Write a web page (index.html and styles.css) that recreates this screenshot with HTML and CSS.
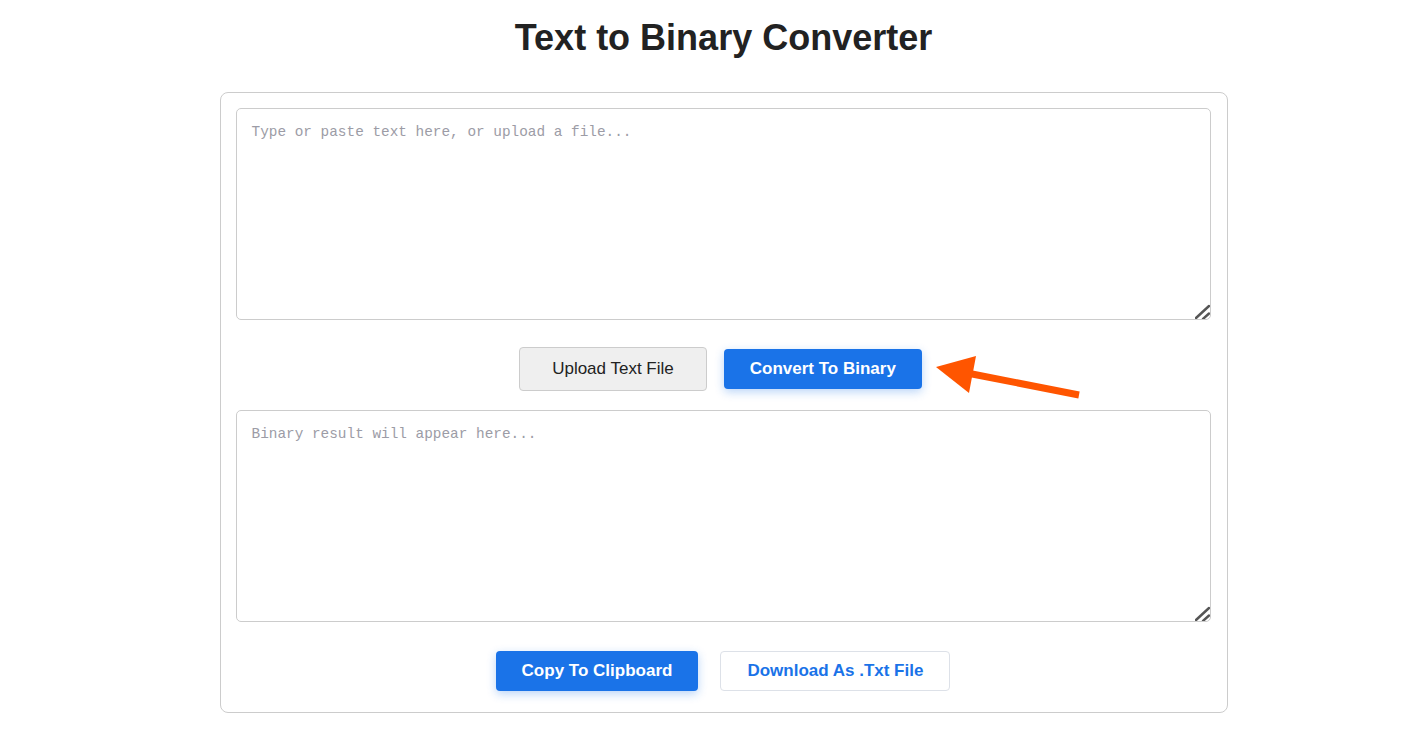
FILE: index.html
```html
<!DOCTYPE html>
<html lang="en">
<head>
    <meta charset="UTF-8">
    <meta name="viewport" content="width=device-width, initial-scale=1.0">
    <title>Text to Binary Converter</title>
    <link rel="stylesheet" href="styles.css">
</head>
<body>

    <h1>Text to Binary Converter</h1>

    <div class="converter">
        <textarea id="inputText" class="text-box" placeholder="Type or paste text here, or upload a file..."></textarea>

        <div class="actions actions-top">
            <label class="upload-btn" for="fileInput">Upload Text File</label>
            <input type="file" id="fileInput" accept=".txt" hidden>
            <button class="btn btn-primary" onclick="convertToBinary()">Convert To Binary</button>
        </div>

        <!-- pointer to the convert button -->
        <svg class="hint-arrow" width="155" height="50" viewBox="0 0 155 50">
            <line x1="36" y1="22" x2="148" y2="44" stroke="#ff5500" stroke-width="7"/>
            <polygon points="5,16 45,5 38,42" fill="#ff5500"/>
        </svg>

        <textarea id="outputText" class="text-box" placeholder="Binary result will appear here..." readonly></textarea>

        <div class="actions actions-bottom">
            <button class="btn btn-primary" onclick="copyResult()">Copy To Clipboard</button>
            <button class="btn btn-outline" onclick="downloadResult()">Download As .Txt File</button>
        </div>
    </div>

    <script>
        function convertToBinary() {
            const text = document.getElementById('inputText').value;
            const bits = Array.from(text).map(c => c.charCodeAt(0).toString(2).padStart(8, '0'));
            document.getElementById('outputText').value = bits.join(' ');
        }

        function copyResult() {
            const out = document.getElementById('outputText').value;
            navigator.clipboard.writeText(out);
        }

        function downloadResult() {
            const out = document.getElementById('outputText').value;
            const link = document.createElement('a');
            link.href = URL.createObjectURL(new Blob([out], { type: 'text/plain' }));
            link.download = 'binary.txt';
            link.click();
        }

        document.getElementById('fileInput').addEventListener('change', e => {
            const file = e.target.files[0];
            if (!file) return;
            const reader = new FileReader();
            reader.onload = () => { document.getElementById('inputText').value = reader.result; };
            reader.readAsText(file);
        });
    </script>

</body>
</html>
```

FILE: styles.css
```css
body {
    font-family: "Liberation Sans", Arial, sans-serif;
    margin: 0;
    padding: 0 0 0 45px;
    background: #fff;
    color: #222;
}

h1 {
    font-size: 36px;
    font-weight: bold;
    text-align: center;
    color: #222;
    margin: 17px 0 33px;
    line-height: 42px;
}

.converter {
    position: relative;
    width: 1008px;
    margin: 0 auto;
    padding: 15px 16px 21px 15px;
    box-sizing: border-box;
    border: 1px solid #ccc;
    border-radius: 8px;
    display: flex;
    flex-direction: column;
}

.text-box {
    display: block;
    width: 100%;
    height: 212px;
    box-sizing: border-box;
    padding: 15px;
    border: 1px solid #ccc;
    border-radius: 5px;
    font-family: "Liberation Mono", "DejaVu Sans Mono", monospace;
    font-size: 14.4px;
    color: #222;
    resize: vertical;
    outline: none;
}

.text-box::placeholder {
    color: #9c9ca6;
}

/* corner grip: two slanted bars */
.text-box::-webkit-resizer {
    background: url("data:image/svg+xml,%3Csvg xmlns='http://www.w3.org/2000/svg' width='16' height='16'%3E%3Cpath d='M1 14 L14 2 M8 15 L14 9.5' stroke='%23555' stroke-width='2.4' stroke-linecap='round'/%3E%3C/svg%3E") no-repeat;
}

.actions {
    display: flex;
    justify-content: center;
    align-items: center;
    gap: 17px;
}

.actions-top {
    margin: 27px 0 19px;
    padding-right: 5px;
}

.actions-bottom {
    margin-top: 29px;
    gap: 22px;
}

.btn {
    font-family: "Liberation Sans", Arial, sans-serif;
    font-size: 17px;
    font-weight: bold;
    height: 40px;
    padding: 0 26px;
    border-radius: 4px;
    cursor: pointer;
}

.btn-primary {
    background: #1a73e8;
    color: #fff;
    border: none;
    box-shadow: 0 3px 10px rgba(26, 115, 232, 0.3);
}

.btn-outline {
    background: #fff;
    color: #1a73e8;
    border: 1px solid #dde1e8;
}

.upload-btn {
    display: inline-flex;
    align-items: center;
    height: 44px;
    padding: 0 32px;
    box-sizing: border-box;
    font-size: 17px;
    color: #222;
    background: #efefef;
    border: 1px solid #ccc;
    border-radius: 4px;
    cursor: pointer;
}

.hint-arrow {
    position: absolute;
    left: 710px;
    top: 258px;
}
```
